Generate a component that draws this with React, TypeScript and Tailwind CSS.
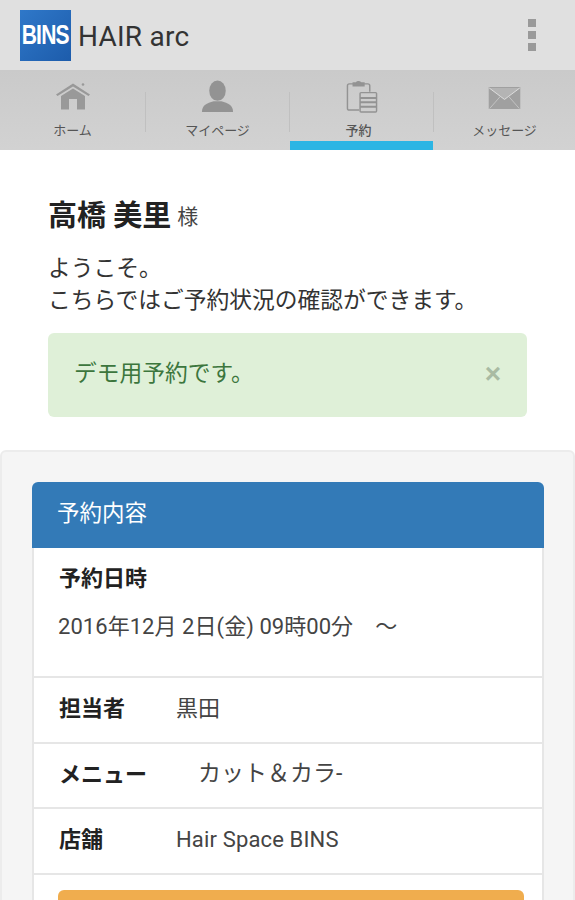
import React from "react";

const font = { fontFamily: '"Roboto","Noto Sans CJK JP",sans-serif' };

function HomeIcon() {
  return (
    <svg className="mb-[4px]" width="34" height="27" viewBox="0 0 34 27" fill="#999999">
      <path d="M0 11.500 L17 0.500 L34 11.500 L32.500 13 L17 3.500 L1.500 13 Z" />
      <circle cx="27" cy="1.500" r="1.300" />
      <path d="M5 13 L17 5.500 L29 13 V26.500 H21 V16 H13 V26.500 H5 Z" />
    </svg>
  );
}
function PersonIcon() {
  return (
    <svg className="mb-px" width="33" height="33" viewBox="0 0 34 34" fill="#939393">
      <ellipse cx="17" cy="11" rx="8.500" ry="10.500" />
      <path d="M1 33 C1 26 6 24 13 22 H21 C28 24 33 26 33 33 Z" />
    </svg>
  );
}
function ClipIcon() {
  return (
    <svg className="mb-px" width="32" height="33" viewBox="0 0 32 34" fill="none" stroke="#939393" strokeWidth="1.500">
      <path d="M13 31 H3 Q1 31 1 29 V6 Q1 4 3 4 H22 Q24 4 24 6 V12" />
      <path d="M7 6 V3 H10 Q12 0.500 15 3 H18 V6 Z" fill="#939393" />
      <rect x="14" y="13" width="17" height="20" rx="1" />
      <path d="M14 18.500 H31 M14 23 H31 M14 27.500 H31" strokeWidth="2" />
    </svg>
  );
}
function MailIcon() {
  return (
    <svg className="mb-[5px]" width="33" height="22" viewBox="0 0 33 23">
      <rect width="33" height="23" fill="#a0a0a0" />
      <path d="M0.500 1 L16.500 13 L32.500 1" fill="#b4b4b4" stroke="#e0e0e0" strokeWidth="1" />
      <path d="M1 22.500 L12 10 M32 22.500 L21 10" stroke="#c4c4c4" strokeWidth="1" />
    </svg>
  );
}

function Tab({ icon, label, active, width, labelClass }: { icon: React.ReactNode; label: string; active?: boolean; width: string; labelClass?: string }) {
  return (
    <div className={`relative flex h-[80px] flex-col items-center ${width}`}>
      <div className="flex h-[44px] items-end justify-center">{icon}</div>
      <div className={`mt-[7px] text-[13px] leading-[20px] text-[#555555] ${labelClass ?? ""} ${active ? "font-medium" : ""}`}>{label}</div>
      {active && <div className="absolute inset-x-0 bottom-0 h-[9px] bg-[#2cb5e4]" />}
    </div>
  );
}

function Divider() {
  return <div className="mb-[18px] mt-[22px] w-px bg-[#c0c0c0]" />;
}

function Row({ label, value, gap, height, valueClass }: { label: string; value: string; gap: string; height: string; valueClass: string }) {
  return (
    <div className={`flex items-center border-t-2 border-[#e6e6e6] pb-[3px] pl-[25px] ${height}`}>
      <div className={`text-[22px] font-bold text-[#222222] ${gap}`}>{label}</div>
      <div className={`text-[#444444] ${valueClass}`}>{value}</div>
    </div>
  );
}

export default function App() {
  return (
    <div className="h-[900px] w-[575px] overflow-hidden bg-white" style={font}>
      <header className="flex h-[70px] items-center bg-[#e0e0e0] pl-[20px] pr-[39px]">
        <div className="flex h-[51px] w-[51px] items-center justify-center bg-gradient-to-br from-[#2f78c9] to-[#1d5cab]">
          <span className="text-[27px] font-bold tracking-[-1px] text-white [transform:scaleX(0.78)]" style={{ fontFamily: '"Liberation Sans",sans-serif' }}>BINS</span>
        </div>
        <div className="ml-[7px] mt-[3px] text-[28px] leading-none tracking-[0.25px] text-[#333333]">HAIR arc</div>
        <div className="ml-auto flex flex-col gap-[4px]">
          <span className="h-[8px] w-[8px] bg-[#9a9a9a]" />
          <span className="h-[8px] w-[8px] bg-[#9a9a9a]" />
          <span className="h-[8px] w-[8px] bg-[#9a9a9a]" />
        </div>
      </header>

      <nav className="flex h-[80px] bg-gradient-to-b from-[#cacaca] to-[#d2d2d2]">
        <Tab icon={<HomeIcon />} label="ホーム" width="w-[145px]" />
        <Divider />
        <Tab icon={<PersonIcon />} label="マイページ" width="w-[143px]" />
        <Divider />
        <Tab icon={<ClipIcon />} label="予約" active width="w-[143px]" labelClass="mr-[6px]" />
        <Divider />
        <Tab icon={<MailIcon />} label="メッセージ" width="w-[141px]" />
      </nav>

      <main className="px-[48px] pt-[46px]">
        <div className="flex items-center">
          <span className="text-[29px] font-bold leading-[40px] text-[#222222]">高橋 美里</span>
          <span className="ml-[6px] mt-[4px] text-[21px] text-[#444444]">様</span>
        </div>
        <p className="mt-[17px] text-[22.750px] leading-[32px] text-[#333333]">
          ようこそ。
          <br />
          こちらではご予約状況の確認ができます。
        </p>
        <div className="mt-[16px] flex h-[84px] items-center justify-between rounded-[6px] bg-[#dff0d8] pb-[2px] pl-[26px] pr-[26px]">
          <span className="text-[22.750px] text-[#3c763d]">デモ用予約です。</span>
          <span className="text-[28px] font-bold leading-none text-[#a9bba3]" style={{ fontFamily: '"Liberation Sans",sans-serif' }}>×</span>
        </div>
      </main>

      <section className="mt-[33px] rounded-t-[6px] border-2 border-[#ececec] bg-[#f5f5f5] pl-[30px] pr-[29px] pt-[30px]">
        <div className="rounded-t-[6px] bg-white">
          <div className="flex h-[66px] items-center rounded-t-[6px] bg-[#337ab7] pb-[2px] pl-[25px] text-[22.500px] text-white">予約内容</div>
          <div className="border-x-2 border-[#e6e6e6]">
            <div className="h-[128px] pl-[25px] pt-[15px]">
              <div className="text-[22px] font-bold leading-[32px] text-[#222222]">予約日時</div>
              <div className="-ml-px mt-[17px] whitespace-pre text-[22px] leading-[30px] tracking-[0.05px] text-[#444444]">2016年12月 2日(金) 09時00分　〜</div>
            </div>
            <Row label="担当者" value="黒田" gap="w-[117px]" height="h-[66px]" valueClass="text-[22px]" />
            <Row label="メニュー" value="カット＆カラ-" gap="w-[139px]" height="h-[65px]" valueClass="text-[23px]" />
            <Row label="店舗" value="Hair Space BINS" gap="w-[117px]" height="h-[66px]" valueClass="text-[22px] tracking-[0.15px]" />
            <div className="border-t-2 border-[#e6e6e6] pl-[24px] pr-[18px] pt-[15px]">
              <div className="h-[50px] rounded-[6px] bg-[#f0ad4e]" />
            </div>
          </div>
        </div>
      </section>
    </div>
  );
}
